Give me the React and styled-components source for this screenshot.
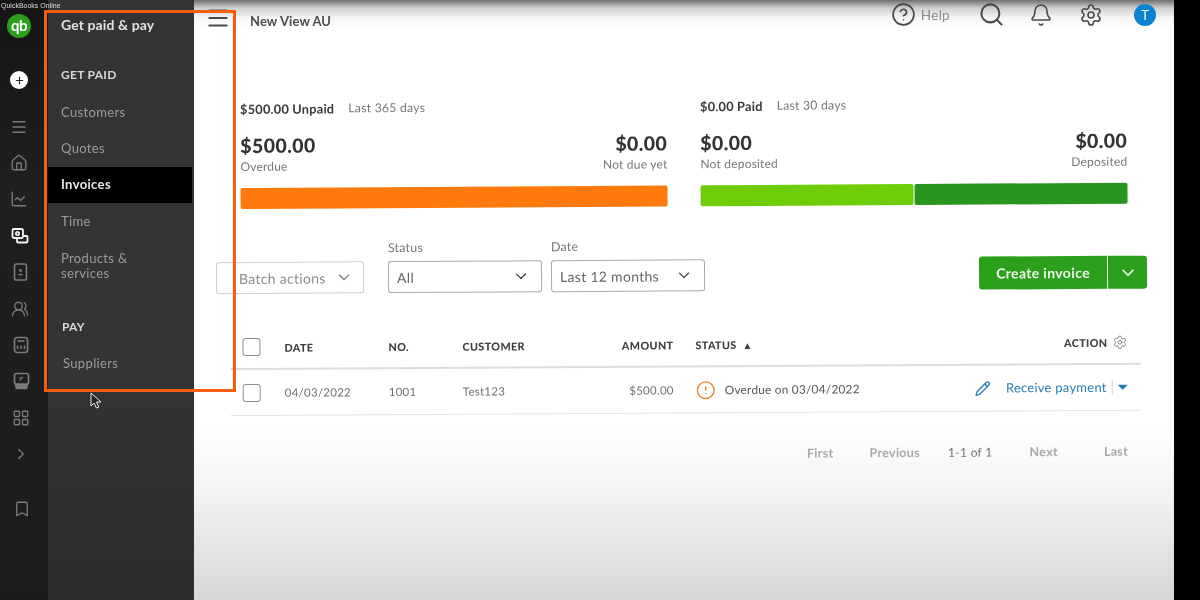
import React from "react";
import styled, { createGlobalStyle } from "styled-components";
import { Home, ChartLine, UsersRound, LayoutGrid, ChevronRight, ChevronDown, Bookmark, Menu, CircleHelp, Search, Bell, Settings, Pencil, Plus, CircleAlert } from "lucide-react";

const Global = createGlobalStyle`
  html, body { margin: 0; padding: 0; background: #000; overflow: hidden; }
  body { font-family: Lato, "Noto Sans", sans-serif; }
`;

const Page = styled.div`
  position: relative;
  display: flex;
  width: 1200px;
  height: 600px;
  overflow: hidden;
  background: #000;
  filter: blur(0.35px);
`;

const Rail = styled.nav`
  position: relative;
  z-index: 1;
  flex: 0 0 48px;
  min-width: 0;
  width: 48px;
  display: flex;
  flex-direction: column;
  align-items: flex-start;
  background: linear-gradient(#151515, #1f1f1f 30%, #1c1c1c);
`;

const AppName = styled.div`
  width: 0;
  height: 12px;
  padding-left: 1px;
  font: 7px/12px "Liberation Sans", sans-serif;
  color: #ddd;
  white-space: nowrap;
`;

const Logo = styled.div`
  width: 24px;
  height: 24px;
  margin: 2px 0 0 7px;
  border-radius: 50%;
  background: #2ca01c;
  color: #fff;
  font: 700 15px/22px Lato, sans-serif;
  text-align: center;
  letter-spacing: -0.5px;
`;

const AddButton = styled.div`
  display: flex;
  align-items: center;
  justify-content: center;
  width: 18px;
  height: 18px;
  margin: 33px 0 0 10px;
  border-radius: 50%;
  background: #fff;
  color: #222;
`;

const RailIcons = styled.div`
  display: flex;
  flex-direction: column;
  align-items: flex-start;
  margin-top: 19.5px;
`;

const RailIcon = styled.div`
  display: flex;
  align-items: center;
  justify-content: center;
  width: 24px;
  height: 36.4px;
  margin-left: ${(p) => p.$left}px;
  margin-bottom: ${(p) => p.$after || 0}px;
  color: ${(p) => (p.$active ? "#f2f2f2" : "#7b7b7b")};
`;

const Sidebar = styled.aside`
  flex: 0 0 146px;
  padding-top: 16px;
  box-sizing: border-box;
  background: linear-gradient(#343437, #343436 60%, #2d2d2d);
`;

const SideTitle = styled.div`
  padding-left: 13px;
  height: 18px;
  font-size: 14px;
  line-height: 18px;
  font-weight: 700;
  color: #e2e2e2;
  letter-spacing: 0.1px;
`;

const SideHeading = styled.div`
  padding-left: ${(p) => p.$inset || 13}px;
  margin-top: ${(p) => p.$top}px;
  height: 18px;
  font-size: 12px;
  line-height: 18px;
  font-weight: 700;
  letter-spacing: 0.3px;
  color: #d8d8d8;
`;

const SideItem = styled.div`
  display: flex;
  align-items: center;
  box-sizing: border-box;
  width: 144px;
  min-height: ${(p) => (p.$tall ? 52 : 36.4)}px;
  padding-left: ${(p) => p.$inset || 13}px;
  font-size: 13px;
  line-height: 15px;
  letter-spacing: 0.35px;
  color: ${(p) => (p.$active ? "#e8e8e8" : "#9b9b9b")};
  font-weight: ${(p) => (p.$active ? 700 : 400)};
  background: ${(p) => (p.$active ? "#000" : "transparent")};
`;

const SideList = styled.div`
  margin-top: 10px;
`;

const Main = styled.main`
  flex: 0 0 980px;
  display: flex;
  flex-direction: column;
  background: linear-gradient(#6f6f6f 0, #cfcfcf 8px, #f6f6f6 18px, #fff 28px, #fff 425px, #f4f4f4 490px, #d6d6d6 600px);
`;

const TopBar = styled.header`
  display: flex;
  align-items: center;
  height: 42px;
  padding: 0 18px 0 11px;
  color: #4a4a4a;
`;

const MenuButton = styled.span`
  display: flex;
  margin-top: -6px;
`;

const PageName = styled.div`
  margin-left: 19px;
  font-size: 13px;
  font-weight: 700;
  color: #4d4d4d;
  letter-spacing: 0.1px;
`;

const TopActions = styled.div`
  margin-left: auto;
  display: flex;
  align-items: center;
  margin-top: -13px;
`;

const HelpText = styled.span`
  margin: 0 28px 0 5px;
  font-size: 13.5px;
  color: #8a8a8a;
  letter-spacing: 0.3px;
`;

const TopGap = styled.span`
  display: flex;
  margin-right: ${(p) => p.$gap}px;
`;

const Avatar = styled.div`
  width: 22px;
  height: 22px;
  border-radius: 50%;
  background: #0a84cf;
  color: #fff;
  font-size: 13px;
  line-height: 22px;
  text-align: center;
`;

const Content = styled.div`
  display: flex;
  flex-direction: column;
  padding: 58px 28px 0 46px;
  transform: rotate(-0.34deg);
  transform-origin: 46px 60px;
`;

const Summaries = styled.section`
  display: grid;
  grid-template-columns: 427px 427px;
  column-gap: 33px;
`;

const SumHead = styled.div`
  display: flex;
  gap: 14px;
  height: 18px;
  line-height: 18px;
  letter-spacing: 0.2px;
`;

const SumTitle = styled.span`
  font-size: 12.8px;
  color: #3a3a3a;
  font-weight: 700;
`;

const SumRange = styled.span`
  font-size: 12.3px;
  color: #777;
`;

const Figures = styled.div`
  display: flex;
  justify-content: space-between;
  margin-top: 16px;
`;

const Figure = styled.div`
  display: flex;
  flex-direction: column;
  text-align: ${(p) => (p.$right ? "right" : "left")};
`;

const Amount = styled.div`
  font-size: 19.5px;
  line-height: 24px;
  font-weight: 900;
  letter-spacing: 0.4px;
  color: #333;
`;

const Caption = styled.div`
  margin-top: 1px;
  font-size: 12px;
  line-height: 16px;
  letter-spacing: 0.2px;
  color: #777;
`;

const Bar = styled.div`
  display: flex;
  gap: 1px;
  height: 21px;
  margin-top: 13px;
`;

const BarPart = styled.div`
  flex: ${(p) => p.$grow} 0 0;
  border-radius: 2px;
  background: ${(p) => p.$color};
`;

const Filters = styled.section`
  display: flex;
  align-items: flex-end;
  margin: 31px 0 0 -25px;
`;

const Field = styled.div`
  display: flex;
  flex-direction: column;
  margin-left: ${(p) => p.$left || 0}px;
`;

const FieldLabel = styled.label`
  height: 17px;
  margin-bottom: 5px;
  font-size: 12.5px;
  line-height: 17px;
  letter-spacing: 0.2px;
  color: #777;
`;

const Select = styled.div`
  display: flex;
  align-items: center;
  justify-content: space-between;
  box-sizing: border-box;
  width: ${(p) => p.$w}px;
  height: 32px;
  padding: 0 ${(p) => (p.$batch ? 10 : 11)}px 0 ${(p) => (p.$batch ? 22 : 8)}px;
  border: 1px solid ${(p) => (p.$batch ? "#cfcfcf" : "#a9a9a9")};
  border-radius: 3px;
  background: #fff;
  font-size: 14px;
  letter-spacing: 0.3px;
  color: ${(p) => (p.$batch ? "#8c8c8c" : "#666")};
`;

const CreateGroup = styled.div`
  margin-left: auto;
  display: flex;
  gap: 1px;
  height: 33px;
`;

const CreateButton = styled.button`
  width: ${(p) => p.$w}px;
  display: flex;
  align-items: center;
  justify-content: center;
  padding: 0;
  border: 0;
  border-radius: ${(p) => (p.$menu ? "0 3px 3px 0" : "3px 0 0 3px")};
  background: #2ca01c;
  color: #eef8ec;
  font: 700 14px Lato, sans-serif;
  letter-spacing: 0.35px;
`;

const Table = styled.section`
  margin: 32px 7px 0 -11px;
`;

const Row = styled.div`
  display: grid;
  grid-template-columns: 54px 104px 74px 100px 111px 1fr auto;
  align-items: center;
  height: ${(p) => p.$h}px;
  border-bottom: ${(p) => (p.$head ? "2px solid #dcdcdc" : "1px solid #e4e4e4")};
  box-sizing: border-box;
`;

const Check = styled.div`
  width: 18px;
  height: 18px;
  margin-left: 12px;
  box-sizing: border-box;
  border: 1px solid #8f8f8f;
  border-radius: 3px;
  background: #fff;
`;

const Th = styled.div`
  font-size: 10.8px;
  font-weight: 900;
  letter-spacing: 0.35px;
  color: #404040;
  text-align: ${(p) => (p.$right ? "right" : "left")};
  padding-left: ${(p) => p.$pad || 0}px;
`;

const Td = styled.div`
  display: ${(p) => (p.$flex ? "flex" : "block")};
  align-items: center;
  gap: 9px;
  font-size: ${(p) => (p.$flex ? 11.8 : 11.5)}px;
  letter-spacing: 0.25px;
  color: ${(p) => p.$color || "#6f6f6f"};
  text-align: ${(p) => (p.$right ? "right" : "left")};
  padding-left: ${(p) => p.$pad || 0}px;
`;

const ActionHead = styled.div`
  display: flex;
  align-items: center;
  gap: 5px;
  padding-right: 13px;
  color: #808080;
`;

const Actions = styled.div`
  display: flex;
  align-items: center;
  padding-right: 13px;
  font-size: 13px;
  letter-spacing: 0.25px;
  color: #2b7fb8;
`;

const PayLink = styled.span`
  margin-left: 15px;
  padding-right: 5px;
  border-right: 1px solid #cfcfcf;
  line-height: 15px;
`;

const Caret = styled.span`
  width: 0;
  height: 0;
  margin-left: 5px;
  border-left: 5px solid transparent;
  border-right: 5px solid transparent;
  border-top: 5px solid #1f78b4;
`;

const Sort = styled.span`
  margin-left: 3px;
  font-size: 10px;
`;

const Pager = styled.nav`
  display: flex;
  justify-content: flex-end;
  margin: 33px 20px 0 0;
  font-size: 12.5px;
  letter-spacing: 0.3px;
`;

const PagerItem = styled.span`
  margin-left: ${(p) => p.$left}px;
  font-size: ${(p) => (p.$current ? 12 : 12.5)}px;
  font-weight: ${(p) => (p.$current ? 400 : 700)};
  color: ${(p) => (p.$current ? "#6f6f6f" : "#a8a8a8")};
`;

const Highlight = styled.div`
  position: absolute;
  left: 44px;
  top: 10px;
  width: 192px;
  height: 382px;
  box-sizing: border-box;
  border: 3px solid #f75d0c;
  pointer-events: none;
  z-index: 3;
`;

const Cursor = styled.svg`
  position: absolute;
  left: 90px;
  top: 392px;
  z-index: 4;
`;

const railStroke = { size: 18, strokeWidth: 1.8 };

const CardsIcon = () => (
  <svg width="18" height="18" viewBox="0 0 18 18" fill="none" stroke="currentColor" strokeWidth="1.8">
    <rect x="1.5" y="2" width="10.5" height="9" rx="1.5" />
    <path d="M6 11v3.5a1 1 0 0 0 1 1h8.5a1 1 0 0 0 1-1V10a1 1 0 0 0-1-1H12" />
    <circle cx="6.5" cy="6.5" r="1.6" />
  </svg>
);

const BookIcon = () => (
  <svg width="15" height="18" viewBox="0 0 15 18" fill="none" stroke="currentColor" strokeWidth="1.6">
    <rect x="1.5" y="1" width="12" height="16" rx="1.8" />
    <circle cx="7.5" cy="7.5" r="1.4" fill="currentColor" stroke="none" />
    <path d="M5 12.2c0-2 5-2 5 0z" fill="currentColor" stroke="none" />
  </svg>
);

const CalcIcon = () => (
  <svg width="16" height="18" viewBox="0 0 16 18" fill="none" stroke="currentColor" strokeWidth="1.7">
    <rect x="1.5" y="1.5" width="13" height="15" rx="2.5" />
    <path d="M4.5 5h7" />
    <path d="M4.5 9.5v3.5M8 9.5v3.5M11.5 9.5v3.5" strokeWidth="1.5" />
  </svg>
);

const ScreenIcon = () => (
  <svg width="17" height="18" viewBox="0 0 17 18" fill="none" stroke="currentColor" strokeWidth="1.7">
    <rect x="1.5" y="1.5" width="14" height="10.5" rx="2" />
    <path d="M2.5 12l1 4.5h10l1-4.5" fill="currentColor" />
    <path d="M6.5 8.5l3.5-3.5M6.5 5.5h1.5" strokeWidth="1.1" />
  </svg>
);

export default function App() {
  return (
    <>
      <Global />
      <Page>
        <Rail>
          <AppName>QuickBooks Online</AppName>
          <Logo>qb</Logo>
          <AddButton><Plus size={11} strokeWidth={2.4} /></AddButton>
          <RailIcons>
            <RailIcon $left={7}><Menu {...railStroke} /></RailIcon>
            <RailIcon $left={7}><Home {...railStroke} /></RailIcon>
            <RailIcon $left={7}><ChartLine {...railStroke} /></RailIcon>
            <RailIcon $left={8} $active><CardsIcon /></RailIcon>
            <RailIcon $left={8}><BookIcon /></RailIcon>
            <RailIcon $left={8}><UsersRound {...railStroke} /></RailIcon>
            <RailIcon $left={9}><CalcIcon /></RailIcon>
            <RailIcon $left={9}><ScreenIcon /></RailIcon>
            <RailIcon $left={9}><LayoutGrid {...railStroke} /></RailIcon>
            <RailIcon $left={9} $after={18}><ChevronRight {...railStroke} /></RailIcon>
            <RailIcon $left={10}><Bookmark {...railStroke} /></RailIcon>
          </RailIcons>
        </Rail>

        <Sidebar>
          <SideTitle>Get paid &amp; pay</SideTitle>
          <SideHeading $top={32}>GET PAID</SideHeading>
          <SideList>
            <SideItem>Customers</SideItem>
            <SideItem>Quotes</SideItem>
            <SideItem $active>Invoices</SideItem>
            <SideItem>Time</SideItem>
            <SideItem $tall>Products &amp;<br />services</SideItem>
          </SideList>
          <SideHeading $top={26} $inset={14}>PAY</SideHeading>
          <SideList>
            <SideItem $inset={15}>Suppliers</SideItem>
          </SideList>
        </Sidebar>

        <Main>
          <TopBar>
            <MenuButton><Menu size={26} strokeWidth={1.8} /></MenuButton>
            <PageName>New View AU</PageName>
            <TopActions>
              <CircleHelp size={25} strokeWidth={1.6} />
              <HelpText>Help</HelpText>
              <TopGap $gap={24}><Search size={27} strokeWidth={1.8} /></TopGap>
              <TopGap $gap={26}><Bell size={24} strokeWidth={1.6} /></TopGap>
              <TopGap $gap={31}><Settings size={24} strokeWidth={1.6} /></TopGap>
              <Avatar>T</Avatar>
            </TopActions>
          </TopBar>

          <Content>
            <Summaries>
              <div>
                <SumHead><SumTitle>$500.00 Unpaid</SumTitle><SumRange>Last 365 days</SumRange></SumHead>
                <Figures>
                  <Figure><Amount>$500.00</Amount><Caption>Overdue</Caption></Figure>
                  <Figure $right><Amount>$0.00</Amount><Caption>Not due yet</Caption></Figure>
                </Figures>
                <Bar><BarPart $grow={1} $color="#ff7a0c" /></Bar>
              </div>
              <div>
                <SumHead><SumTitle>$0.00 Paid</SumTitle><SumRange>Last 30 days</SumRange></SumHead>
                <Figures>
                  <Figure><Amount>$0.00</Amount><Caption>Not deposited</Caption></Figure>
                  <Figure $right><Amount>$0.00</Amount><Caption>Deposited</Caption></Figure>
                </Figures>
                <Bar>
                  <BarPart $grow={212} $color="#6fcc08" />
                  <BarPart $grow={212} $color="#2a961f" />
                </Bar>
              </div>
            </Summaries>

            <Filters>
              <Field>
                <Select $w={148} $batch>Batch actions <ChevronDown size={18} strokeWidth={1.8} color="#777" /></Select>
              </Field>
              <Field $left={24}>
                <FieldLabel>Status</FieldLabel>
                <Select $w={154}>All <ChevronDown size={18} strokeWidth={1.8} color="#444" /></Select>
              </Field>
              <Field $left={9}>
                <FieldLabel>Date</FieldLabel>
                <Select $w={154}>Last 12 months <ChevronDown size={18} strokeWidth={1.8} color="#444" /></Select>
              </Field>
              <CreateGroup>
                <CreateButton $w={128}>Create invoice</CreateButton>
                <CreateButton $w={39} $menu><ChevronDown size={20} strokeWidth={2} /></CreateButton>
              </CreateGroup>
            </Filters>

            <Table>
              <Row $h={44} $head>
                <Check />
                <Th>DATE</Th>
                <Th>NO.</Th>
                <Th>CUSTOMER</Th>
                <Th $right>AMOUNT</Th>
                <Th $pad={22}>STATUS <Sort>▲</Sort></Th>
                <ActionHead><Th>ACTION</Th><Settings size={15} strokeWidth={1.5} /></ActionHead>
              </Row>
              <Row $h={46}>
                <Check />
                <Td>04/03/2022</Td>
                <Td>1001</Td>
                <Td>Test123</Td>
                <Td $right>$500.00</Td>
                <Td $flex $pad={22} $color="#555"><CircleAlert size={20} strokeWidth={1.7} color="#e8872f" />Overdue on 03/04/2022</Td>
                <Actions>
                  <Pencil size={16} strokeWidth={2} />
                  <PayLink>Receive payment</PayLink>
                  <Caret />
                </Actions>
              </Row>
            </Table>

            <Pager>
              <PagerItem>First</PagerItem>
              <PagerItem $left={36}>Previous</PagerItem>
              <PagerItem $left={28} $current>1-1 of 1</PagerItem>
              <PagerItem $left={37}>Next</PagerItem>
              <PagerItem $left={46}>Last</PagerItem>
            </Pager>
          </Content>
        </Main>

        <Highlight />
        <Cursor width="14" height="18" viewBox="0 0 14 18">
          <path d="M1 1v13l3.2-3 2.2 5 2.4-1-2.2-5H11z" fill="#222" stroke="#eee" strokeWidth="1" />
        </Cursor>
      </Page>
    </>
  );
}
